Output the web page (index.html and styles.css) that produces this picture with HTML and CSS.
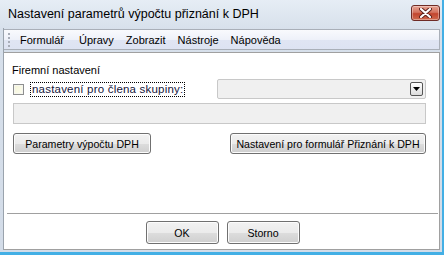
FILE: index.html
```
<!DOCTYPE html>
<html lang="cs">
  <head>
    <meta charset="UTF-8" />
    <title>Nastavení parametrů výpočtu přiznání k DPH</title>
    <link rel="stylesheet" href="styles.css">
  </head>
  <body>
    <div class="window">
      <!-- Title bar -->
      <div class="titlebar">
        <span class="title">Nastavení parametrů výpočtu přiznání k DPH</span>
        <button class="close" title="Zavřít">
          <svg width="13" height="10" viewBox="0 0 13 10">
            <path d="M2 1 L11 9 M11 1 L2 9" stroke="#5a1f1a" stroke-width="4" stroke-linecap="round" />
            <path d="M2 1 L11 9 M11 1 L2 9" stroke="#ffffff" stroke-width="2.2" stroke-linecap="round" />
          </svg>
        </button>
      </div>

      <div class="client">
        <!-- Menu -->
        <div class="menubar">
          <span class="grip"></span>
          <span class="menuItem menuFirst">Formulář</span>
          <span class="menuItem">Úpravy</span>
          <span class="menuItem">Zobrazit</span>
          <span class="menuItem">Nástroje</span>
          <span class="menuItem">Nápověda</span>
        </div>

        <!-- Dialog body -->
        <div class="panel">
          <div class="group">
            <div class="groupTitle">Firemní nastavení</div>
            <div class="memberRow">
              <label class="check">
                <span class="checkbox"></span>
                <span class="checkLabel">nastavení pro člena skupiny:</span>
              </label>
              <div class="combo">
                <span class="comboArrow">
                  <svg width="7" height="4" viewBox="0 0 7 4"><path d="M0 0 H7 L3.5 4 Z" fill="#000" /></svg>
                </span>
              </div>
            </div>
            <div class="textbox"></div>
            <div class="buttonRow">
              <button class="btn btnParams">Parametry výpočtu DPH</button>
              <button class="btn btnForm">Nastavení pro formulář Přiznání k DPH</button>
            </div>
          </div>

          <div class="footer">
            <button class="btn btnDialog">OK</button>
            <button class="btn btnDialog">Storno</button>
          </div>
        </div>
      </div>
    </div>
  </body>
</html>
```

FILE: styles.css
```
/* ============ Base ============ */
html,
body {
  margin: 0;
  height: 100%;
  overflow: hidden;
  background: #ffffff;
}

body {
  font-family: "Liberation Sans", Arial, sans-serif;
  font-size: 11px;
  color: #000;
}

button {
  font-family: inherit;
  font-size: inherit;
}

/* ============ Window frame ============ */
.window {
  width: 444px;
  height: 255px;
  box-sizing: border-box;
  display: flex;
  flex-direction: column;
  padding: 0 2px 2px 3px;
  background: linear-gradient(#e6edf5, #d7e0eb 30px, #d3dce8);
  border-right: 2px solid #43afe5;
  border-bottom: 3px solid #43afe5;
}

.titlebar {
  flex: 0 0 28px;
  display: flex;
  align-items: flex-start;
  justify-content: space-between;
}

.title {
  margin: 7px 0 0 5px;
  font-size: 12.5px;
  color: #000;
}

.close {
  margin: 5px 0 0 0;
  width: 29px;
  height: 16px;
  padding: 0;
  display: flex;
  align-items: center;
  justify-content: center;
  border: 1px solid #6e2b25;
  border-radius: 3px;
  background: linear-gradient(#e8a493, #d4735f 45%, #c2452e 55%, #cf6a4f);
  box-shadow: inset 0 0 0 1px rgba(255, 255, 255, 0.35);
}

/* ============ Client area ============ */
.client {
  flex: 1;
  display: flex;
  flex-direction: column;
  border-left: 1px solid #9aa3ad;
}

.menubar {
  height: 19px;
  display: flex;
  align-items: center;
  padding-left: 10px;
  margin-top: 1px;
  border: 1px solid #a9afb8;
  border-left: none;
  background: linear-gradient(#f9fafd, #eef1f9 50%, #e0e5f3 51%, #dde3f2);
  position: relative;
}

.grip {
  position: absolute;
  left: 4px;
  top: 3px;
  width: 2px;
  height: 14px;
  background: repeating-linear-gradient(#a8adb8 0 2px, transparent 2px 4px);
}

.menuItem {
  padding: 0 6px;
  color: #000;
}

.menuFirst {
  padding-right: 9px;
}

.panel {
  flex: 1;
  margin-top: 2px;
  display: flex;
  flex-direction: column;
  background: #ffffff;
  border: 1px solid #a0a0a0;
  border-left: none;
}

/* ============ Company settings ============ */
.group {
  flex: 1;
  padding: 9px 13px 0 9px;
}

.groupTitle {
  margin-left: -1px;
  height: 16px;
  line-height: 16px;
}

.memberRow {
  display: flex;
  align-items: center;
  justify-content: space-between;
  height: 20px;
  margin-top: 1px;
}

.check {
  display: flex;
  align-items: center;
}

.checkbox {
  width: 9px;
  height: 9px;
  border: 1px solid #8e8f8f;
  background: linear-gradient(135deg, #f4f4d8, #fdfdf0);
  box-shadow: inset 0 0 0 1px #f6f6f0;
}

.checkLabel {
  margin-left: 7px;
  padding: 0 1px;
  line-height: 13px;
  font-size: 11.5px;
  letter-spacing: 0.2px;
  color: #14143a;
  outline: 1px dotted #000;
}

.combo {
  width: 205px;
  height: 18px;
  display: flex;
  align-items: center;
  justify-content: flex-end;
  padding-right: 2px;
  border: 1px solid #c8c8c8;
  border-radius: 2px;
  background: #f0f0f0;
}

.comboArrow {
  width: 11px;
  height: 12px;
  display: flex;
  align-items: center;
  justify-content: center;
  border: 1px solid #555;
  border-radius: 2px;
  background: linear-gradient(#ffffff, #dcdcdc);
}

.textbox {
  height: 19px;
  margin-top: 4px;
  border: 1px solid #c8c8c8;
  background: #f0f0f0;
}

.buttonRow {
  display: flex;
  justify-content: space-between;
  margin-top: 9px;
}

/* ============ Buttons ============ */
.btn {
  height: 21px;
  padding: 0;
  font-size: 10.6px;
  border: 1px solid #707070;
  border-radius: 3px;
  color: #000;
  background: linear-gradient(#f2f2f2, #ebebeb 50%, #dddddd 51%, #cfcfcf);
  box-shadow: inset 0 0 0 1px #fcfcfc;
}

.btnParams {
  width: 138px;
}

.btnForm {
  width: 196px;
}

/* ============ Footer ============ */
.footer {
  display: flex;
  justify-content: center;
  gap: 8px;
  margin: 0 1px 0 3px;
  padding: 7px 0 5px;
  border-top: 1px solid #a0a0a0;
}

.btnDialog {
  width: 73px;
  height: 23px;
}
```
